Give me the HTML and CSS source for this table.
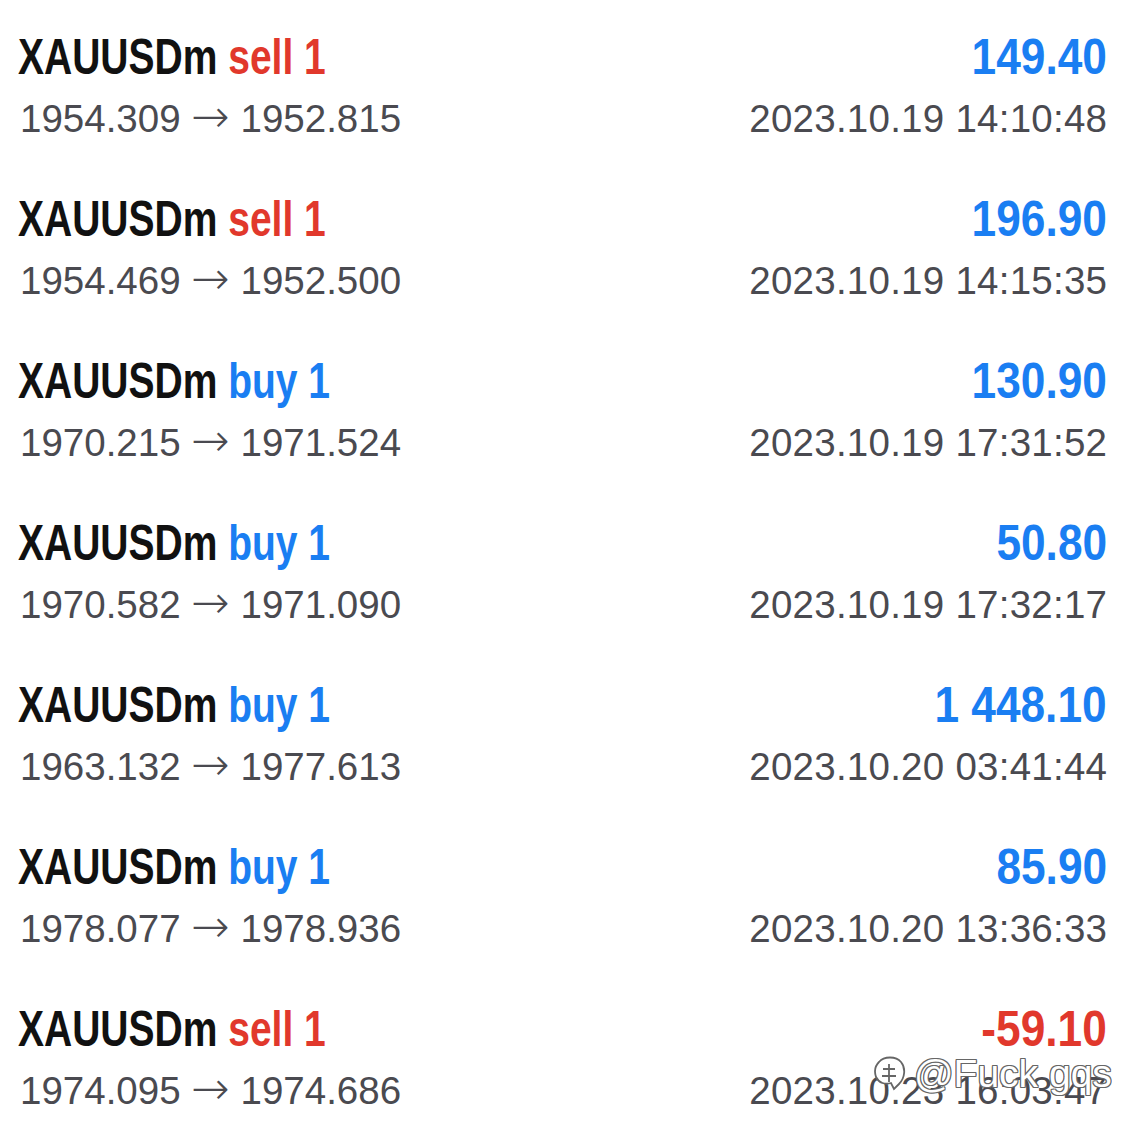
FILE: index.html
```html
<!DOCTYPE html>
<html>
<head>
<meta charset="utf-8">
<link rel="stylesheet" href="styles.css">
</head>
<body>
<div class="list">
  <div class="row">
    <div class="line top"><span class="sym">XAUUSDm <span class="sell">sell 1</span></span><span class="pl pos">149.40</span></div>
    <div class="line sub"><span>1954.309 <span class="arr">→</span> 1952.815</span><span class="date">2023.10.19 14:10:48</span></div>
  </div>
  <div class="row">
    <div class="line top"><span class="sym">XAUUSDm <span class="sell">sell 1</span></span><span class="pl pos">196.90</span></div>
    <div class="line sub"><span>1954.469 <span class="arr">→</span> 1952.500</span><span class="date">2023.10.19 14:15:35</span></div>
  </div>
  <div class="row">
    <div class="line top"><span class="sym">XAUUSDm <span class="buy">buy 1</span></span><span class="pl pos">130.90</span></div>
    <div class="line sub"><span>1970.215 <span class="arr">→</span> 1971.524</span><span class="date">2023.10.19 17:31:52</span></div>
  </div>
  <div class="row">
    <div class="line top"><span class="sym">XAUUSDm <span class="buy">buy 1</span></span><span class="pl pos">50.80</span></div>
    <div class="line sub"><span>1970.582 <span class="arr">→</span> 1971.090</span><span class="date">2023.10.19 17:32:17</span></div>
  </div>
  <div class="row">
    <div class="line top"><span class="sym">XAUUSDm <span class="buy">buy 1</span></span><span class="pl pos">1 448.10</span></div>
    <div class="line sub"><span>1963.132 <span class="arr">→</span> 1977.613</span><span class="date">2023.10.20 03:41:44</span></div>
  </div>
  <div class="row">
    <div class="line top"><span class="sym">XAUUSDm <span class="buy">buy 1</span></span><span class="pl pos">85.90</span></div>
    <div class="line sub"><span>1978.077 <span class="arr">→</span> 1978.936</span><span class="date">2023.10.20 13:36:33</span></div>
  </div>
  <div class="row">
    <div class="line top"><span class="sym">XAUUSDm <span class="sell">sell 1</span></span><span class="pl neg">-59.10</span></div>
    <div class="line sub"><span>1974.095 <span class="arr">→</span> 1974.686</span><span class="date">2023.10.23 16:03:47</span></div>
  </div>
</div>
<div class="watermark">
  <svg class="wm-logo" viewBox="0 0 36 38">
    <path d="M7 7 C12 1 24 1 29 7 C34 13 33 23 27 29 L22 34 L19 28 C13 30 7 28 4 22 C2 16 3 11 7 7 Z" fill="#fff" stroke="#666" stroke-width="1.8"/>
    <path d="M11 14 L23 14 M17 9 L17 27 M10 21 L24 21" fill="none" stroke="#666" stroke-width="1.8"/>
  </svg>
  <span class="wm-text">@Fuck gqs</span>
</div>
</body>
</html>
```
FILE: styles.css
```css
html, body {
  margin: 0;
  padding: 0;
  background: #ffffff;
}
body {
  width: 1125px;
  height: 1137px;
  overflow: hidden;
  position: relative;
}
.list {
  display: flex;
  flex-direction: column;
}
.row {
  padding: 29px 18px 24px 18px;
  height: 109px;
  display: flex;
  flex-direction: column;
  gap: 9px;
}
.line {
  display: flex;
  justify-content: space-between;
  align-items: baseline;
  white-space: nowrap;
}
.top {
  font-family: "Liberation Sans", Arial, sans-serif;
  font-weight: bold;
  font-size: 50px;
  line-height: 56px;
  height: 56px;
  color: #111111;
}
.sym {
  display: inline-block;
  transform: scaleX(0.78);
  transform-origin: left center;
}
.pl {
  display: inline-block;
  transform: scaleX(0.885);
  transform-origin: right center;
}
.sell { color: #e1382c; }
.buy { color: #1a7ef2; }
.pos { color: #1a7ef2; }
.neg { color: #e1382c; }
.sub {
  font-family: "Liberation Sans", Arial, sans-serif;
  font-size: 38.5px;
  line-height: 44px;
  height: 44px;
  color: #4a4a50;
  padding-left: 2px;
}
.date {
  letter-spacing: 0.25px;
  margin-right: -0.25px;
}
.arr {
  font-family: "DejaVu Sans", sans-serif;
  font-weight: 200;
  font-size: 46px;
  line-height: 44px;
}
.watermark {
  position: absolute;
  left: 872px;
  top: 1054px;
  display: flex;
  align-items: center;
  gap: 6px;
}
.wm-logo {
  width: 36px;
  height: 38px;
  flex: none;
}
.wm-text {
  font-family: "Liberation Sans", Arial, sans-serif;
  font-size: 39px;
  line-height: 40px;
  color: #ffffff;
  text-shadow: -1px -1px 0 #666, 1px -1px 0 #666, -1px 1px 0 #666, 1px 1px 0 #666, 1px 0 0 #666, -1px 0 0 #666;
}
```
